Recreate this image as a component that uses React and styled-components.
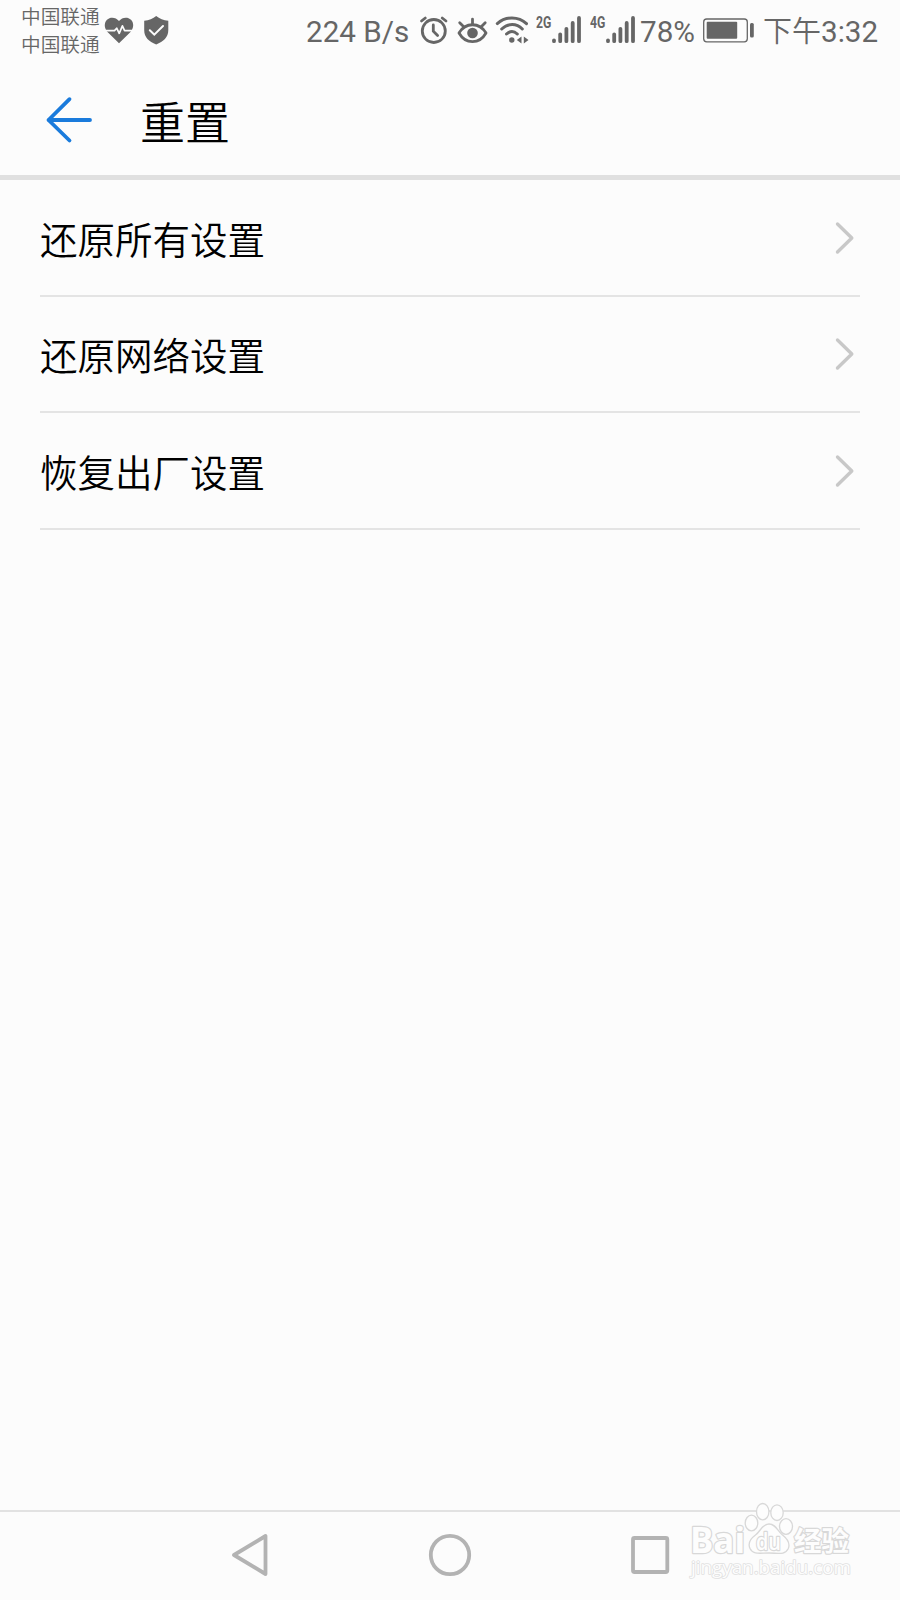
import React from 'react'

import styled, { createGlobalStyle } from 'styled-components'

const rows = ['还原所有设置', '还原网络设置', '恢复出厂设置']
const carriers = ['中国联通', '中国联通']

const SignalBars = ({ network, width }) => (
    <Signal $width={width}>
        <NetworkLabel>{network}</NetworkLabel>
        <StatusIcon width="30" viewBox="0 0 30 60">
            <g stroke="#666" strokeWidth="3.8" strokeLinecap="round">
                <path d="M2 40.3V41.2M8.2 34.3V41.2M14.4 28.8V41.2M20.7 23V41.2M27 18V41.2" />
            </g>
        </StatusIcon>
    </Signal>
)

const StatusBar = () => (
    <Status>
        <Carriers>
            {carriers.map((name, i) => <Carrier key={i}>{name}</Carrier>)}
        </Carriers>
        <StatusIcon width="36" viewBox="103 0 36 60">
            <path fill="#666" d="M119 43.2 108 32.5C104 28.5 103.8 23 107 19.7C110.4 16.5 116 17.2 119 21C122 17.2 127.6 16.5 131 19.7C134.2 23 134 28.5 130 32.5Z" />
            <path fill="none" stroke="#fcfcfc" strokeWidth="1.7" strokeLinejoin="round" d="M104 30.6H114.5L116.7 28.2L119.2 33.3L122.4 25.8L124.6 30.6H134" />
        </StatusIcon>
        <StatusIcon width="34" viewBox="139 0 34 60">
            <path fill="#666" d="M156.2 16C159.5 18.7 163.5 20.3 168.3 20.7V30C168.3 37.5 163.5 41.5 156.2 44.5C148.9 41.5 144.2 37.5 144.2 30V20.7C149 20.3 153 18.7 156.2 16Z" />
            <path fill="none" stroke="#fcfcfc" strokeWidth="2" strokeLinecap="round" d="M149.8 30.2 154.3 34.7 163 26" />
        </StatusIcon>
        <Spacer />
        <StatusText $width={111}>224 B/s</StatusText>
        <StatusIcon width="36" viewBox="417 0 36 60">
            <g fill="none" stroke="#666" strokeWidth="2.8" strokeLinecap="round">
                <circle cx="433.8" cy="31" r="11.5" />
                <path d="M433.3 25V31.2L437.6 35.5M421.5 21 425.3 18M446 21 442.2 18" />
            </g>
        </StatusIcon>
        <StatusIcon width="38" viewBox="453 0 38 60">
            <g fill="none" stroke="#666" strokeWidth="2.8" strokeLinecap="round" strokeLinejoin="round">
                <path d="M459 33C465.5 22 479.5 22 486 33C479.5 44.5 465.5 44.5 459 33Z" />
                <path d="M472.5 24V19.2M463.5 26.5 459.7 22.8M481.5 26.5 485.2 22.8" />
            </g>
            <circle cx="472.5" cy="33" r="5.3" fill="#666" />
        </StatusIcon>
        <StatusIcon width="45" viewBox="491 0 45 60">
            <g fill="none" stroke="#666" strokeWidth="3" strokeLinecap="round">
                <path d="M497.3 23.6C505.5 16 518.5 16 526.5 23.6M501.7 29C508 23 516.5 23 522.3 29M506.5 34C510 30.8 514 30.8 517.3 34" />
            </g>
            <circle cx="511.8" cy="40" r="2.7" fill="#666" />
            <path fill="#666" d="M521.5 36.5V43.5L516.8 40ZM523.8 36.5 528.5 40 523.8 43.5Z" />
        </StatusIcon>
        <SignalBars network="2G" width={54} />
        <SignalBars network="4G" width={50} />
        <StatusText $width={62}>78%</StatusText>
        <StatusIcon width="61" viewBox="702 0 61 60">
            <rect x="703.7" y="19" width="43.6" height="22.8" rx="3" fill="none" stroke="#666" strokeWidth="1.3" />
            <rect x="706.7" y="21.8" width="30.5" height="17" rx="1" fill="#666" />
            <rect x="750" y="23" width="3.8" height="14.6" rx="1.5" fill="#666" />
        </StatusIcon>
        <StatusText $width={117}><Period>下午</Period>3:32</StatusText>
    </Status>
)

const Watermark = () => (
    <WatermarkSvg width="170" height="84" viewBox="685 1500 170 84">
        <g fill="#fdfdfd" stroke="#d8d8d8" strokeWidth="1.3">
            <ellipse cx="751.5" cy="1523" rx="6.3" ry="7.8" />
            <ellipse cx="762.7" cy="1511.7" rx="6.2" ry="8.2" />
            <ellipse cx="777" cy="1512.7" rx="6.2" ry="7.8" />
            <ellipse cx="786" cy="1526.5" rx="6.5" ry="7.8" />
            <path d="M769 1524C762 1524 761 1531 755.5 1535C750 1539 747.5 1543 750 1548.5C753 1555 760 1553 769 1553C778 1553 785 1555.5 788.3 1548.5C790.5 1543 787 1538.5 782.5 1535C777 1530.5 776 1524 769 1524Z" />
        </g>
        <Outlined x="690" y="1552.5" fontSize="35" fontWeight="700" textLength="55" lengthAdjust="spacingAndGlyphs">Bai</Outlined>
        <Outlined x="756" y="1550" fontSize="23" fontWeight="600" textLength="25" lengthAdjust="spacingAndGlyphs">du</Outlined>
        <Outlined x="794" y="1550.5" fontSize="27.5" fontWeight="700" textLength="55">经验</Outlined>
        <Outlined x="691" y="1574" fontSize="18.5" textLength="160" lengthAdjust="spacingAndGlyphs" $soft>jingyan.baidu.com</Outlined>
    </WatermarkSvg>
)

const App = () => (
    <Screen>
        <GlobalStyle />
        <StatusBar />
        <Header>
            <svg width="48" height="48" viewBox="45 96 48 48" fill="none" stroke="#1a7bdc" strokeWidth="3.8" strokeLinecap="round" strokeLinejoin="round">
                <path d="M69.5 99.2 48.5 120 69.5 140.5M48.5 120H90" />
            </svg>
            <Title>重置</Title>
        </Header>
        <List>
            {rows.map(label => (
                <Row key={label}>
                    <RowLabel>{label}</RowLabel>
                    <svg width="20" height="34" viewBox="0 0 20 34" fill="none" stroke="#c8c8c8" strokeWidth="3.4" strokeLinecap="round" strokeLinejoin="round">
                        <path d="M2.5 3 16.8 17 2.5 31" />
                    </svg>
                </Row>
            ))}
        </List>
        <NavBar>
            <NavIcon viewBox="225 1530 50 50">
                <path d="M234 1555 265.5 1536V1574Z" />
            </NavIcon>
            <NavIcon viewBox="425 1530 50 50">
                <circle cx="450" cy="1555" r="19.2" />
            </NavIcon>
            <NavIcon viewBox="625 1530 50 50">
                <rect x="633" y="1538" width="34.3" height="34" rx="1.5" />
            </NavIcon>
            <Watermark />
        </NavBar>
    </Screen>
)

export default App

const GlobalStyle = createGlobalStyle`
    * {
        box-sizing: border-box;
    }

    body {
        margin: 0;
        background: #fcfcfc;
        font-family: Roboto, "Noto Sans CJK SC", sans-serif;
    }
`

const Screen = styled.div`
    display: flex;
    flex-direction: column;
    width: 900px;
    height: 1600px;
    background: #fcfcfc;
    overflow: hidden;
`

const Status = styled.div`
    display: flex;
    align-items: center;
    height: 60px;
    padding: 0 20px 0 21px;
    color: #666;
`

const Carriers = styled.div`
    width: 82px;
    padding-top: 4px;
`

const Carrier = styled.div`
    height: 28px;
    line-height: 28px;
    font-size: 19.7px;
    font-weight: 350;
    white-space: nowrap;
`

const StatusIcon = styled.svg`
    flex: none;
    height: 60px;
`

const Spacer = styled.div`
    flex: 1;
`

const StatusText = styled.span`
    flex: none;
    width: ${({ $width }) => $width}px;
    padding-top: 3px;
    font-size: 29.6px;
    line-height: 40px;
    white-space: nowrap;
`

const Period = styled.span`
    font-family: "Noto Sans CJK SC", sans-serif;
    font-size: 29px;
    font-weight: 350;
    line-height: 0;
`

const Signal = styled.div`
    display: flex;
    flex: none;
    width: ${({ $width }) => $width}px;
`

const NetworkLabel = styled.span`
    width: 16px;
    height: 20px;
    margin-top: 12px;
    font-size: 17px;
    font-weight: 700;
    line-height: 20px;
    transform: scaleX(0.72);
    transform-origin: left;
`

const Header = styled.header`
    display: flex;
    align-items: center;
    gap: 47px;
    height: 120px;
    padding: 5px 0 0 45px;
    border-bottom: 5px solid #e0e0e0;
`

const Title = styled.h1`
    margin: 0;
    padding-top: 2px;
    font-family: "Noto Sans CJK SC", sans-serif;
    font-size: 45px;
    font-weight: 350;
    line-height: 60px;
    color: #000;
`

const List = styled.main`
    flex: 1;
    padding: 0 40px;
`

const Row = styled.div`
    display: flex;
    justify-content: space-between;
    align-items: center;
    height: 116.6px;
    padding: 1px 5px 0 0;
    border-bottom: 2px solid #e4e4e4;
`

const RowLabel = styled.span`
    font-family: "Noto Sans CJK SC", sans-serif;
    font-size: 37.5px;
    font-weight: 350;
    line-height: 50px;
    color: #000;
`

const NavBar = styled.nav`
    position: relative;
    display: flex;
    justify-content: center;
    align-items: center;
    gap: 150px;
    height: 90px;
    padding-bottom: 2px;
    border-top: 2px solid #e2e2e2;
`

const NavIcon = styled.svg`
    width: 50px;
    height: 50px;
    fill: none;
    stroke: #b3b3b3;
    stroke-width: 3.8;
    stroke-linejoin: round;
`

const WatermarkSvg = styled.svg`
    position: absolute;
    right: 45px;
    bottom: 16px;
`

const Outlined = styled.text`
    font-family: "Open Sans", "Noto Sans CJK SC", sans-serif;
    fill: #fdfdfd;
    stroke: ${({ $soft }) => ($soft ? '#e0e0e0' : '#d8d8d8')};
    stroke-width: ${({ $soft }) => ($soft ? 1.6 : 2.4)};
    stroke-linejoin: round;
    paint-order: stroke;
`
